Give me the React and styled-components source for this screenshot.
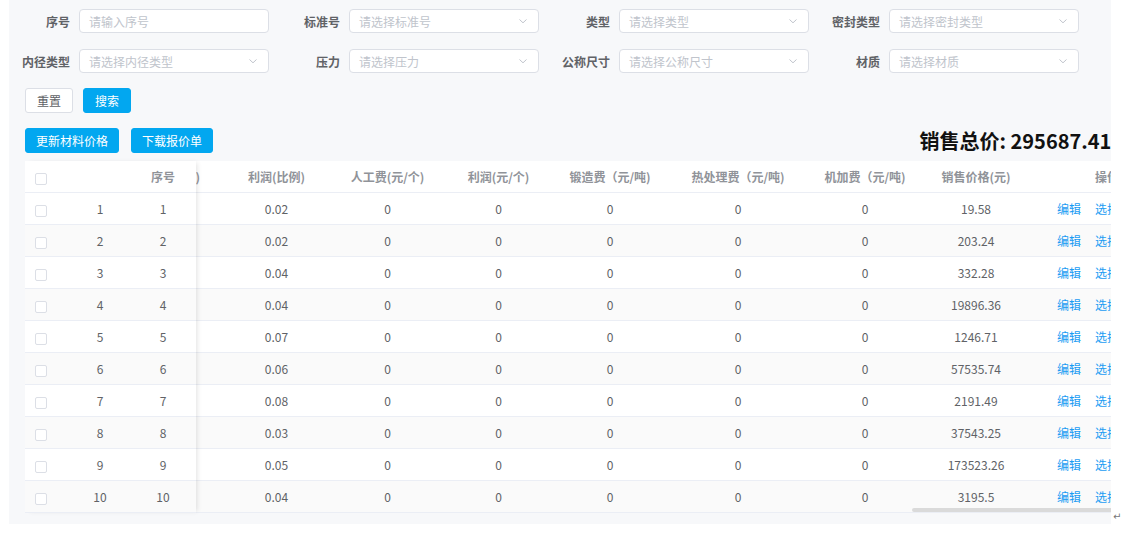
import { useLayoutEffect, useRef } from 'react';
import styled, { createGlobalStyle } from 'styled-components';

const GlobalStyle = createGlobalStyle`
	body {
		margin: 0;
		background: #fff;
		font-family: "Noto Sans CJK SC", "Microsoft YaHei", sans-serif;
	}
`;

const rows = [
	{ no: 1, profit: '0.02', price: '19.58' },
	{ no: 2, profit: '0.02', price: '203.24' },
	{ no: 3, profit: '0.04', price: '332.28' },
	{ no: 4, profit: '0.04', price: '19896.36' },
	{ no: 5, profit: '0.07', price: '1246.71' },
	{ no: 6, profit: '0.06', price: '57535.74' },
	{ no: 7, profit: '0.08', price: '2191.49' },
	{ no: 8, profit: '0.03', price: '37543.25' },
	{ no: 9, profit: '0.05', price: '173523.26' },
	{ no: 10, profit: '0.04', price: '3195.5' },
];

const fields = [
	{ label: '序号', placeholder: '请输入序号', select: false },
	{ label: '标准号', placeholder: '请选择标准号', select: true },
	{ label: '类型', placeholder: '请选择类型', select: true },
	{ label: '密封类型', placeholder: '请选择密封类型', select: true },
	{ label: '内径类型', placeholder: '请选择内径类型', select: true },
	{ label: '压力', placeholder: '请选择压力', select: true },
	{ label: '公称尺寸', placeholder: '请选择公称尺寸', select: true },
	{ label: '材质', placeholder: '请选择材质', select: true },
];

// scrolled table columns (first two are scrolled out of view)
const columns = [
	{ title: '重量(kg)', width: 100 },
	{ title: '材料价格(元)', width: 111 },
	{ title: '利润(比例)', width: 111 },
	{ title: '人工费(元/个)', width: 111 },
	{ title: '利润(元/个)', width: 111 },
	{ title: '锻造费（元/吨)', width: 112 },
	{ title: '热处理费（元/吨)', width: 144 },
	{ title: '机加费（元/吨)', width: 110 },
	{ title: '销售价格(元)', width: 112 },
	{ title: '操作', width: 150 },
];

const Page = styled.div`
	display: flex;
	align-items: flex-end;
	padding-left: 9px;
`;

const Panel = styled.div`
	flex: none;
	width: 1102px;
	height: 524px;
	background: #f7f8fa;
	overflow: hidden;
`;

const Content = styled.div`
	width: 1126px;
	padding-top: 9px;
`;

const FormGrid = styled.div`
	display: grid;
	grid-template-columns: repeat(4, 260px);
	column-gap: 10px;
	row-gap: 16px;
`;

const Field = styled.div`
	display: flex;
	align-items: center;
	gap: 9px;
`;

const Label = styled.label`
	flex: none;
	width: 61px;
	text-align: right;
	font-size: 12px;
	font-weight: 600;
	color: #606266;
	white-space: nowrap;
`;

const Control = styled.div`
	width: 190px;
	height: 24px;
	box-sizing: border-box;
	display: flex;
	align-items: center;
	padding: 0 10px 0 9px;
	border: 1px solid #dcdfe6;
	border-radius: 4px;
	background: #fff;
	font-size: 12px;
	color: #c0c4cc;
`;

const Chevron = styled.svg`
	margin-left: auto;
	width: 10px;
	height: 10px;
`;

const ButtonRow = styled.div`
	display: flex;
	align-items: center;
	height: 25px;
	gap: ${(p) => p.$gap}px;
	margin-top: 15px;
	padding-left: 16px;
`;

const Button = styled.button`
	height: 25px;
	padding: 0 ${(p) => p.$pad}px;
	border-radius: 3px;
	border: 1px solid ${(p) => (p.$primary ? '#02a7f0' : '#dcdfe6')};
	background: ${(p) => (p.$primary ? '#02a7f0' : '#fff')};
	color: ${(p) => (p.$primary ? '#fff' : '#606266')};
	font-family: inherit;
	font-size: 12px;
	cursor: pointer;
`;

const Total = styled.div`
	margin-left: auto;
	font-size: 20px;
	line-height: 25px;
	font-weight: 700;
	color: #111;
	white-space: nowrap;
`;

const TableBox = styled.div`
	position: relative;
	display: flex;
	margin: 8px 0 0 16px;
	background: #fff;
`;

const FixedSide = styled.div`
	position: relative;
	z-index: 1;
	flex: none;
	width: 171px;
	background: #fff;
	box-shadow: 3px 0 5px -2px rgba(0, 0, 0, 0.12);
`;

const ScrollSide = styled.div`
	flex: 1;
	min-width: 0;
	overflow: hidden;
`;

const Table = styled.table`
	table-layout: fixed;
	border-collapse: separate;
	border-spacing: 0;
	width: ${(p) => p.$width}px;
`;

const Th = styled.th`
	height: 31px;
	padding: 0;
	border-bottom: 1px solid #ebeef5;
	font-size: 12px;
	font-weight: 600;
	color: #909399;
	text-align: ${(p) => p.$align || 'center'};
	padding-left: ${(p) => p.$indent || 0}px;
	white-space: nowrap;
	overflow: hidden;
`;

const Tr = styled.tr`
	background: ${(p) => (p.$striped ? '#fafafa' : '#fff')};
`;

const Td = styled.td`
	height: 31px;
	padding: 0;
	padding-left: ${(p) => p.$indent || 0}px;
	border-bottom: 1px solid #ebeef5;
	font-size: 12px;
	color: #606266;
	text-align: ${(p) => p.$align || 'center'};
	white-space: nowrap;
	overflow: hidden;
`;

const Checkbox = styled.span`
	display: inline-block;
	vertical-align: middle;
	width: 12px;
	height: 12px;
	box-sizing: border-box;
	border: 1px solid #dcdfe6;
	border-radius: 2px;
	background: #fff;
`;

const Links = styled.div`
	display: flex;
	justify-content: center;
	gap: 14px;
`;

const Link = styled.a`
	color: #1a9cf3;
	cursor: pointer;
`;

const ScrollThumb = styled.div`
	position: absolute;
	z-index: 2;
	left: 887px;
	bottom: 1px;
	width: 260px;
	height: 4px;
	border-radius: 2px;
	background: #dadada;
`;

const ReturnMark = styled.span`
	margin: 0 0 1px 2px;
	font-family: "DejaVu Sans", sans-serif;
	font-size: 10px;
	line-height: 12px;
	color: #777;
`;

const ChevronIcon = () => (
	<Chevron viewBox="0 0 10 10">
		<path d="M1.5 3.5 L5 6.8 L8.5 3.5" fill="none" stroke="#c0c4cc" strokeWidth="1" />
	</Chevron>
);

const App = () => {
	const scrollRef = useRef(null);

	useLayoutEffect(() => {
		if (scrollRef.current) scrollRef.current.scrollLeft = 186;
	}, []);

	const tableWidth = columns.reduce((acc, c) => acc + c.width, 0);

	return (
		<>
			<GlobalStyle />
			<Page>
				<Panel>
					<Content>
						<FormGrid>
							{fields.map((f) => (
								<Field key={f.label}>
									<Label>{f.label}</Label>
									<Control>
										{f.placeholder}
										{f.select && <ChevronIcon />}
									</Control>
								</Field>
							))}
						</FormGrid>

						<ButtonRow $gap={10}>
							<Button $pad={11}>重置</Button>
							<Button $pad={11} $primary>
								搜索
							</Button>
						</ButtonRow>

						<ButtonRow $gap={12}>
							<Button $pad={10} $primary>
								更新材料价格
							</Button>
							<Button $pad={10} $primary>
								下载报价单
							</Button>
							<Total>销售总价: 295687.4100</Total>
						</ButtonRow>

						<TableBox>
							<FixedSide>
								<Table $width={171}>
									<colgroup>
										<col style={{ width: 45 }} />
										<col style={{ width: 60 }} />
										<col style={{ width: 66 }} />
									</colgroup>
									<thead>
										<tr>
											<Th $align="left" $indent={10}>
												<Checkbox />
											</Th>
											<Th />
											<Th>序号</Th>
										</tr>
									</thead>
									<tbody>
										{rows.map((r, i) => (
											<Tr key={r.no} $striped={i % 2 === 1}>
												<Td $align="left" $indent={10}>
													<Checkbox />
												</Td>
												<Td>{r.no}</Td>
												<Td>{r.no}</Td>
											</Tr>
										))}
									</tbody>
								</Table>
							</FixedSide>

							<ScrollSide ref={scrollRef}>
								<Table $width={tableWidth}>
									<colgroup>
										{columns.map((c) => (
											<col key={c.title} style={{ width: c.width }} />
										))}
									</colgroup>
									<thead>
										<tr>
											{columns.map((c) => (
												<Th key={c.title}>{c.title}</Th>
											))}
										</tr>
									</thead>
									<tbody>
										{rows.map((r, i) => (
											<Tr key={r.no} $striped={i % 2 === 1}>
												<Td>1.2</Td>
												<Td>15.6</Td>
												<Td>{r.profit}</Td>
												<Td>0</Td>
												<Td>0</Td>
												<Td>0</Td>
												<Td>0</Td>
												<Td>0</Td>
												<Td>{r.price}</Td>
												<Td>
													<Links>
														<Link>编辑</Link>
														<Link>选择</Link>
														<Link>删除</Link>
													</Links>
												</Td>
											</Tr>
										))}
									</tbody>
								</Table>
							</ScrollSide>
							<ScrollThumb />
						</TableBox>
					</Content>
				</Panel>
				<ReturnMark>↵</ReturnMark>
			</Page>
		</>
	);
};

export default App;
